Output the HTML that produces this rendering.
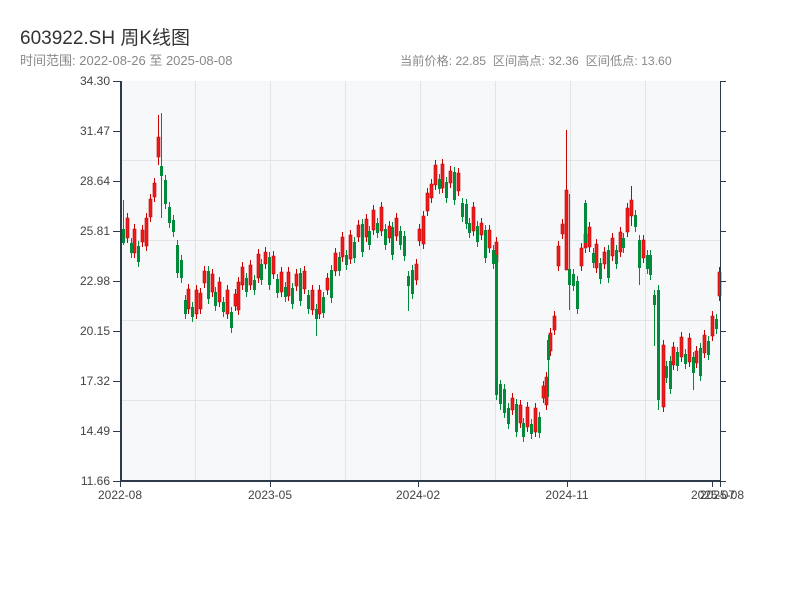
<!DOCTYPE html>
<html><head><meta charset="utf-8"><style>
body{margin:0;background:#fff;width:800px;height:600px;overflow:hidden;font-family:"Liberation Sans","Noto Sans CJK SC",sans-serif}
.t{position:absolute;left:20px;top:23px;font-size:19px;color:#333}
.s{position:absolute;top:51px;font-size:12px;color:#888}
</style></head><body>
<div class="t">603922.SH 周K线图</div>
<div class="s" style="left:20px;font-size:13px;top:50px">时间范围: 2022-08-26 至 2025-08-08</div>
<div class="s" style="left:400px;font-size:12.2px">当前价格: 22.85&nbsp;&nbsp;区间高点: 32.36&nbsp;&nbsp;区间低点: 13.60</div>
<svg width="800" height="600" style="position:absolute;left:0;top:0" font-family="Liberation Sans, sans-serif" font-size="12">
<rect x="121" y="81" width="599" height="400" fill="#f7f8fa"/>
<g stroke="#e2e4e8" stroke-width="1">
<line x1="121" x2="720" y1="160.5" y2="160.5"/><line x1="121" x2="720" y1="240.5" y2="240.5"/><line x1="121" x2="720" y1="320.5" y2="320.5"/><line x1="121" x2="720" y1="400.5" y2="400.5"/>
<line y1="81" y2="481" x1="195.5" x2="195.5"/><line y1="81" y2="481" x1="270.5" x2="270.5"/><line y1="81" y2="481" x1="345.5" x2="345.5"/><line y1="81" y2="481" x1="420.5" x2="420.5"/><line y1="81" y2="481" x1="495.5" x2="495.5"/><line y1="81" y2="481" x1="570.5" x2="570.5"/><line y1="81" y2="481" x1="645.5" x2="645.5"/>
</g>
<path fill="#c80000" d="M127 213h1v30h-1zM134 224h1v34h-1zM142 225h1v22h-1zM146 213h1v38h-1zM150 194h1v28h-1zM154 178h1v24h-1zM158 115h1v50h-1zM188 284h1v30h-1zM196 285h1v34h-1zM200 288h1v26h-1zM204 266h1v22h-1zM212 269h1v28h-1zM219 277h1v30h-1zM227 285h1v34h-1zM235 289h1v22h-1zM238 277h1v38h-1zM242 262h1v28h-1zM250 260h1v30h-1zM258 249h1v34h-1zM265 247h1v22h-1zM273 251h1v28h-1zM281 267h1v30h-1zM288 267h1v34h-1zM296 269h1v22h-1zM304 266h1v28h-1zM312 285h1v30h-1zM319 285h1v34h-1zM327 273h1v22h-1zM335 248h1v28h-1zM342 232h1v30h-1zM350 230h1v34h-1zM358 220h1v22h-1zM366 214h1v28h-1zM373 205h1v30h-1zM381 202h1v34h-1zM389 221h1v22h-1zM396 213h1v28h-1zM416 259h1v26h-1zM419 224h1v22h-1zM423 211h1v38h-1zM427 188h1v28h-1zM431 179h1v24h-1zM435 160h1v30h-1zM442 159h1v34h-1zM450 166h1v22h-1zM458 168h1v28h-1zM473 202h1v34h-1zM481 218h1v22h-1zM489 225h1v28h-1zM496 237h1v30h-1zM512 393h1v22h-1zM520 400h1v28h-1zM527 402h1v30h-1zM535 403h1v34h-1zM543 381h1v22h-1zM546 372h1v38h-1zM550 328h1v28h-1zM554 311h1v24h-1zM558 241h1v30h-1zM562 219h1v20h-1zM566 130h1v140h-1zM581 243h1v28h-1zM585 229h1v24h-1zM589 222h1v30h-1zM596 239h1v34h-1zM604 247h1v22h-1zM612 233h1v28h-1zM620 227h1v30h-1zM627 203h1v34h-1zM631 186h1v40h-1zM643 235h1v28h-1zM663 340h1v72h-1zM673 342h1v28h-1zM681 332h1v30h-1zM689 333h1v34h-1zM696 346h1v22h-1zM704 330h1v28h-1zM712 311h1v30h-1zM719 267h1v34h-1z"/>
<path fill="#ee1c1c" stroke="#c00000" stroke-width="0.6" d="M126 218h3v20h-3zM133 229h3v24h-3zM141 230h3v12h-3zM145 218h3v28h-3zM149 199h3v18h-3zM153 183h3v14h-3zM157 137h3v20h-3zM187 289h3v20h-3zM195 290h3v24h-3zM199 293h3v16h-3zM203 271h3v12h-3zM211 274h3v18h-3zM218 282h3v20h-3zM226 290h3v24h-3zM234 294h3v12h-3zM237 282h3v28h-3zM241 267h3v18h-3zM249 265h3v20h-3zM257 254h3v24h-3zM264 252h3v12h-3zM272 256h3v18h-3zM280 272h3v20h-3zM287 272h3v24h-3zM295 274h3v12h-3zM303 271h3v18h-3zM311 290h3v20h-3zM318 290h3v24h-3zM326 278h3v12h-3zM334 253h3v18h-3zM341 237h3v20h-3zM349 235h3v24h-3zM357 225h3v12h-3zM365 219h3v18h-3zM372 210h3v20h-3zM380 207h3v24h-3zM388 226h3v12h-3zM395 218h3v18h-3zM415 264h3v16h-3zM418 229h3v12h-3zM422 216h3v28h-3zM426 193h3v18h-3zM430 184h3v14h-3zM434 165h3v20h-3zM441 164h3v24h-3zM449 171h3v12h-3zM457 173h3v18h-3zM472 207h3v24h-3zM480 223h3v12h-3zM488 230h3v18h-3zM495 242h3v20h-3zM511 398h3v12h-3zM519 405h3v18h-3zM526 407h3v20h-3zM534 408h3v24h-3zM542 386h3v12h-3zM545 377h3v28h-3zM549 333h3v18h-3zM553 316h3v14h-3zM557 246h3v20h-3zM561 224h3v10h-3zM565 190h3v80h-3zM580 248h3v18h-3zM584 234h3v14h-3zM588 227h3v20h-3zM595 244h3v24h-3zM603 252h3v12h-3zM611 238h3v18h-3zM619 232h3v20h-3zM626 208h3v24h-3zM630 200h3v16h-3zM642 240h3v18h-3zM662 345h3v62h-3zM672 347h3v18h-3zM680 337h3v20h-3zM688 338h3v24h-3zM695 351h3v12h-3zM703 335h3v18h-3zM711 316h3v20h-3zM718 272h3v24h-3z"/>
<path fill="#008a3a" d="M122 229h3v14h-3zM123 200h1v45h-1zM130 243h3v10h-3zM131 238h1v20h-1zM137 246h3v16h-3zM138 241h1v26h-1zM160 166h3v10h-3zM161 113h1v105h-1zM164 180h3v24h-3zM165 175h1v34h-1zM168 207h3v16h-3zM169 202h1v26h-1zM172 220h3v12h-3zM173 215h1v22h-1zM176 245h3v28h-3zM177 240h1v38h-1zM180 260h3v18h-3zM181 255h1v28h-1zM184 300h3v14h-3zM185 295h1v24h-1zM191 307h3v10h-3zM192 302h1v20h-1zM207 271h3v28h-3zM208 266h1v38h-1zM214 292h3v14h-3zM215 287h1v24h-1zM222 302h3v10h-3zM223 297h1v20h-1zM230 312h3v16h-3zM231 307h1v26h-1zM245 278h3v14h-3zM246 273h1v24h-1zM253 280h3v10h-3zM254 275h1v20h-1zM260 264h3v16h-3zM261 259h1v26h-1zM268 257h3v28h-3zM269 252h1v38h-1zM276 279h3v14h-3zM277 274h1v24h-1zM284 287h3v10h-3zM285 282h1v20h-1zM291 288h3v16h-3zM292 283h1v26h-1zM299 273h3v28h-3zM300 268h1v38h-1zM307 295h3v14h-3zM308 290h1v24h-1zM315 309h3v10h-3zM316 304h1v32h-1zM322 297h3v16h-3zM323 292h1v26h-1zM330 270h3v28h-3zM331 265h1v38h-1zM338 257h3v14h-3zM339 252h1v24h-1zM345 255h3v10h-3zM346 250h1v20h-1zM353 242h3v16h-3zM354 237h1v26h-1zM361 224h3v28h-3zM362 219h1v38h-1zM368 231h3v14h-3zM369 226h1v24h-1zM376 223h3v10h-3zM377 218h1v20h-1zM384 229h3v16h-3zM385 224h1v26h-1zM391 227h3v28h-3zM392 222h1v38h-1zM399 231h3v14h-3zM400 226h1v24h-1zM403 236h3v20h-3zM404 231h1v30h-1zM407 276h3v10h-3zM408 271h1v40h-1zM411 270h3v24h-3zM412 265h1v34h-1zM438 179h3v10h-3zM439 174h1v20h-1zM445 182h3v16h-3zM446 177h1v26h-1zM453 172h3v28h-3zM454 167h1v38h-1zM461 203h3v14h-3zM462 198h1v24h-1zM465 204h3v20h-3zM466 199h1v30h-1zM468 223h3v10h-3zM469 218h1v20h-1zM476 226h3v16h-3zM477 221h1v26h-1zM484 230h3v28h-3zM485 225h1v38h-1zM492 250h3v14h-3zM493 245h1v24h-1zM495 258h3v137h-3zM496 255h1v145h-1zM499 384h3v20h-3zM500 380h1v30h-1zM503 389h3v24h-3zM504 384h1v34h-1zM507 408h3v16h-3zM508 403h1v26h-1zM515 404h3v28h-3zM516 399h1v38h-1zM522 423h3v14h-3zM523 418h1v24h-1zM530 424h3v10h-3zM531 419h1v20h-1zM538 417h3v16h-3zM539 412h1v26h-1zM547 340h3v20h-3zM548 335h1v62h-1zM568 269h3v16h-3zM569 194h1v116h-1zM572 274h3v12h-3zM573 269h1v22h-1zM576 281h3v28h-3zM577 276h1v38h-1zM584 203h3v40h-3zM585 200h1v50h-1zM592 253h3v10h-3zM593 248h1v20h-1zM599 263h3v16h-3zM600 258h1v26h-1zM607 250h3v28h-3zM608 245h1v38h-1zM615 250h3v14h-3zM616 245h1v24h-1zM622 238h3v10h-3zM623 233h1v20h-1zM634 215h3v12h-3zM635 210h1v22h-1zM638 240h3v28h-3zM639 235h1v50h-1zM646 255h3v14h-3zM647 250h1v24h-1zM649 255h3v20h-3zM650 250h1v30h-1zM653 295h3v10h-3zM654 290h1v56h-1zM657 290h3v110h-3zM658 285h1v125h-1zM665 366h3v12h-3zM666 361h1v22h-1zM669 361h3v28h-3zM670 356h1v38h-1zM676 352h3v14h-3zM677 347h1v24h-1zM684 354h3v10h-3zM685 349h1v20h-1zM692 357h3v16h-3zM693 352h1v38h-1zM699 348h3v28h-3zM700 343h1v38h-1zM707 341h3v14h-3zM708 336h1v24h-1zM715 319h3v10h-3zM716 314h1v20h-1z"/>
<g stroke="#2e3a4a" stroke-width="2"><line x1="121" y1="81" x2="121" y2="482"/><line x1="120" y1="481" x2="721" y2="481"/></g>
<g stroke="#2e3a4a" stroke-width="1">
<line x1="720.5" y1="81" x2="720.5" y2="481"/>
<path d="M113 81.5h8M113 131.5h8M113 181.5h8M113 231.5h8M113 281.5h8M113 331.5h8M113 381.5h8M113 431.5h8M113 481.5h8M720 81.5h6M720 131.5h6M720 181.5h6M720 231.5h6M720 281.5h6M720 331.5h6M720 381.5h6M720 431.5h6M720 481.5h6M120.5 481v6M270.5 481v6M418.5 481v6M567.5 481v6M712.5 481v6M720.5 481v6"/>
</g>
<g fill="#444" text-anchor="end">
<text x="110" y="85">34.30</text><text x="110" y="135">31.47</text><text x="110" y="185">28.64</text><text x="110" y="235">25.81</text><text x="110" y="285">22.98</text><text x="110" y="335">20.15</text><text x="110" y="385">17.32</text><text x="110" y="435">14.49</text><text x="110" y="485">11.66</text>
</g>
<g fill="#444" text-anchor="middle">
<text x="120" y="499">2022-08</text><text x="270" y="499">2023-05</text><text x="418" y="499">2024-02</text><text x="567" y="499">2024-11</text><text x="713" y="499">2025-07</text><text x="722" y="499">2025-08</text>
</g>
</svg>
</body></html>
